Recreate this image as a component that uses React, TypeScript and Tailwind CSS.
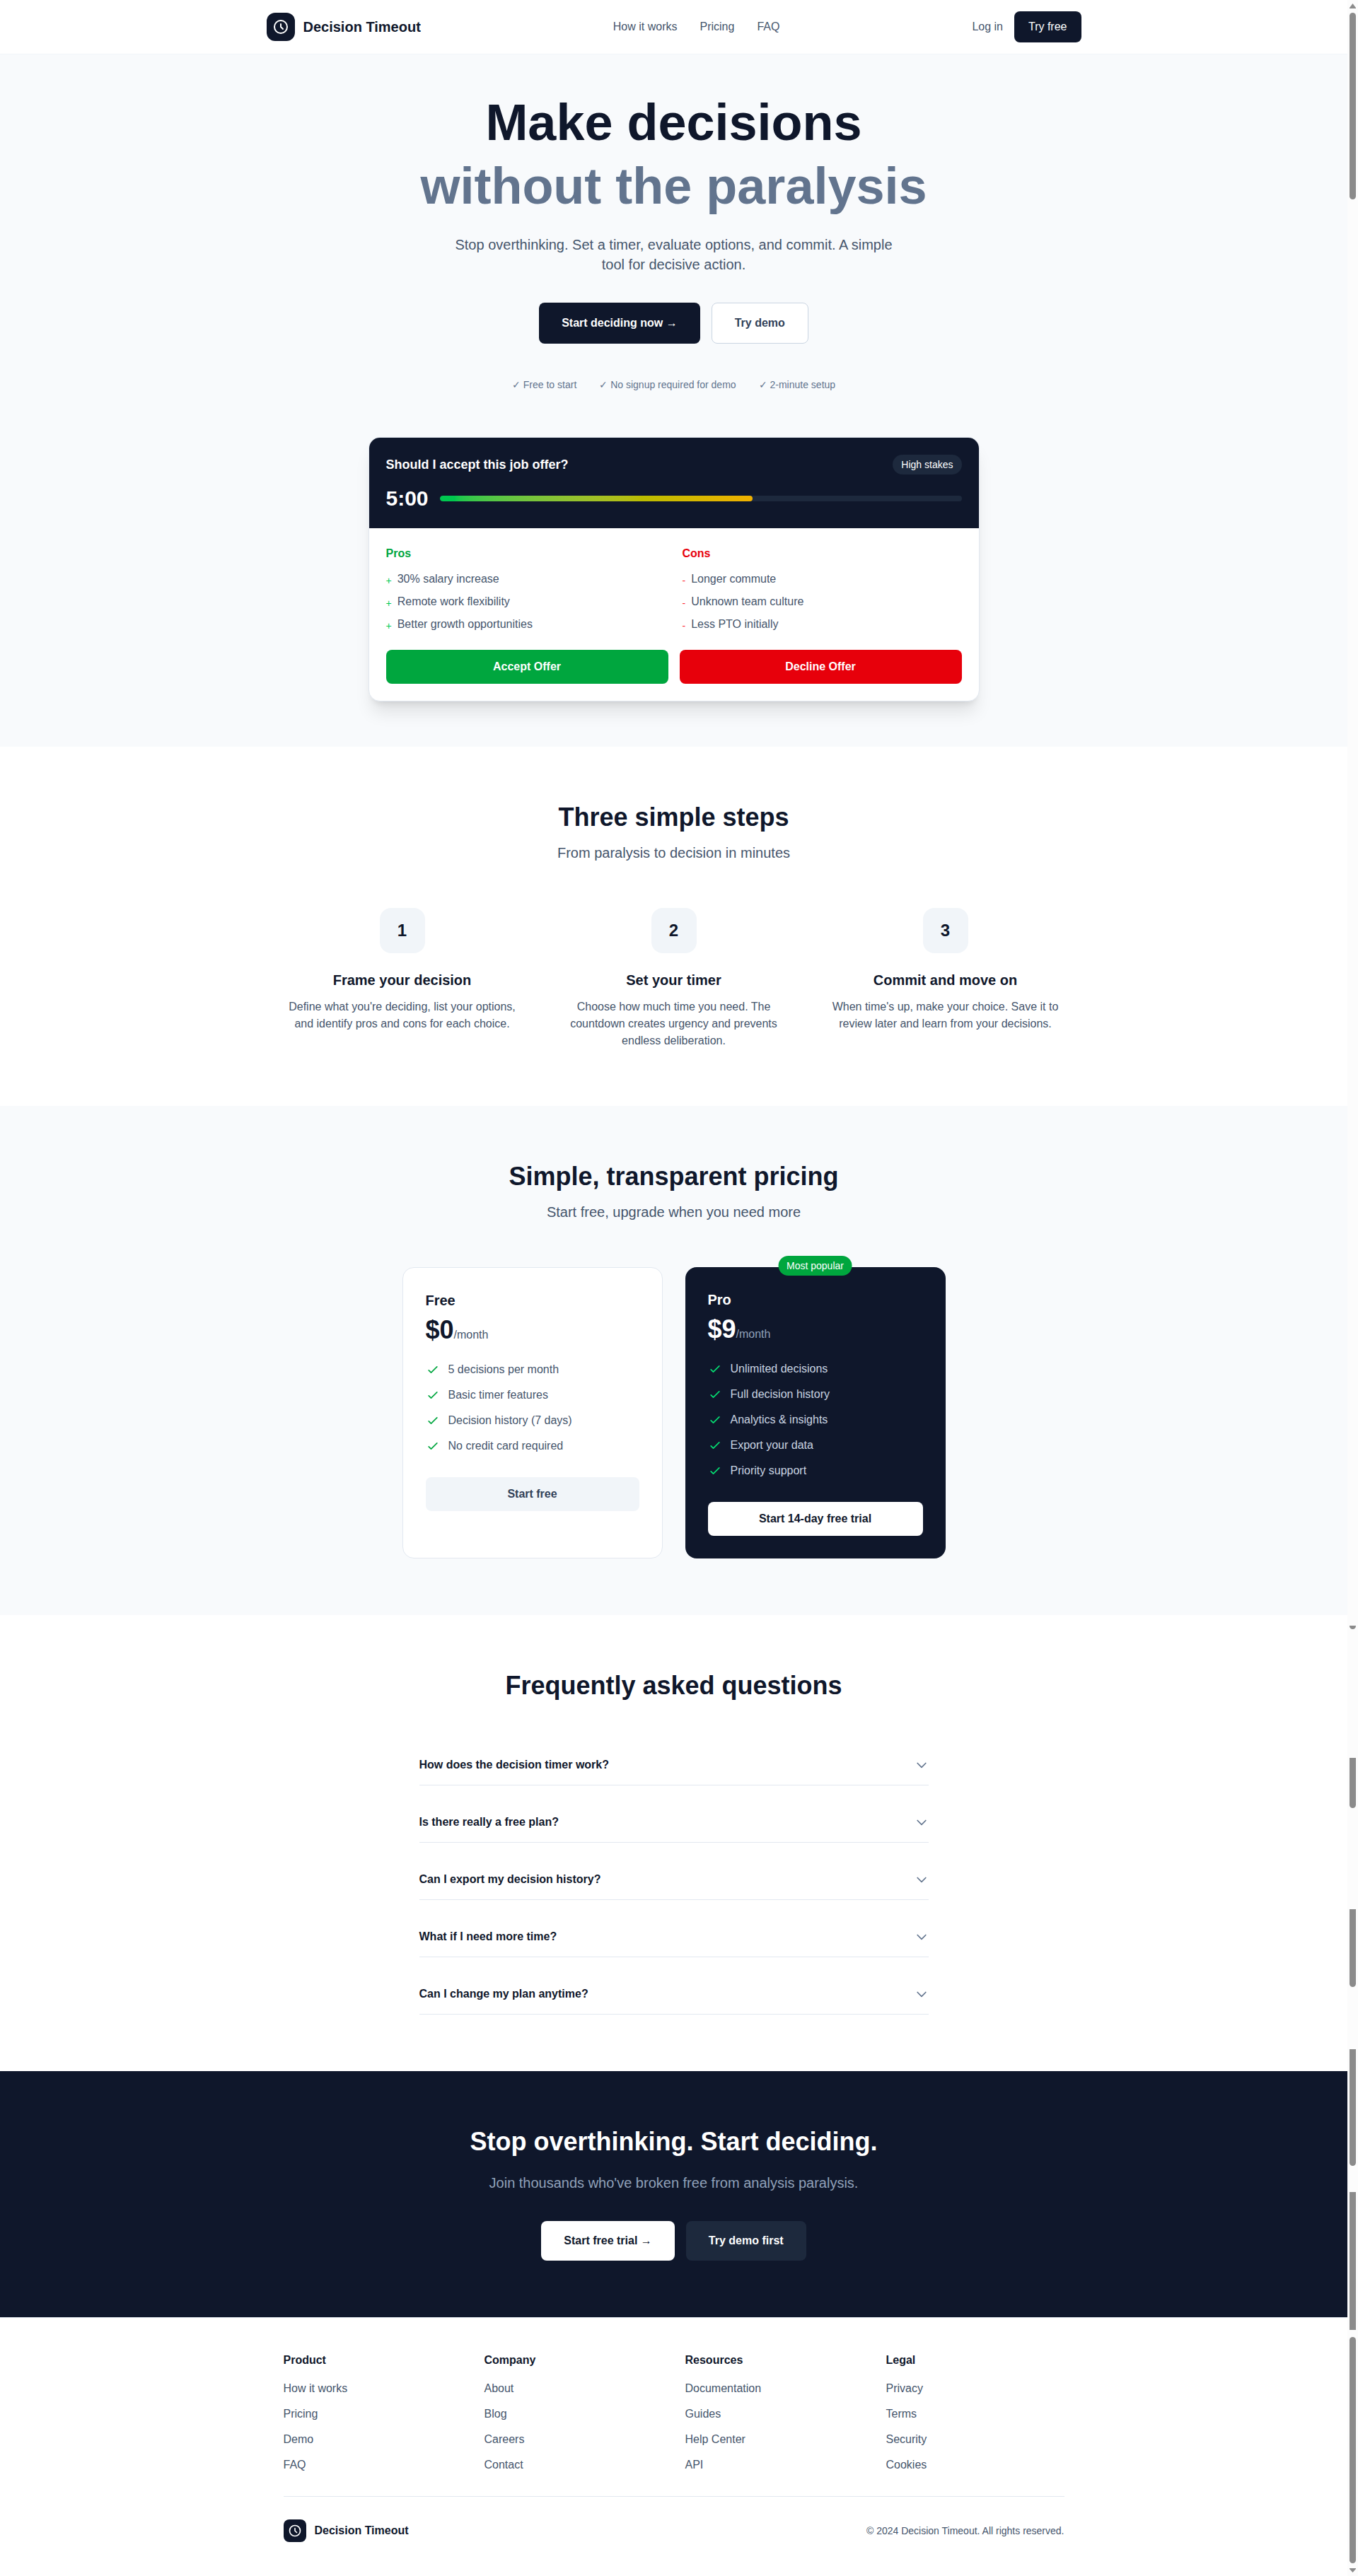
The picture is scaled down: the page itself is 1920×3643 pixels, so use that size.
import React from "react";

const NAV_LINKS = ["How it works", "Pricing", "FAQ"];

const ASSURANCES = ["Free to start", "No signup required for demo", "2-minute setup"];

const PROS = ["30% salary increase", "Remote work flexibility", "Better growth opportunities"];
const CONS = ["Longer commute", "Unknown team culture", "Less PTO initially"];

const STEPS = [
  {
    title: "Frame your decision",
    text: "Define what you're deciding, list your options, and identify pros and cons for each choice.",
  },
  {
    title: "Set your timer",
    text: "Choose how much time you need. The countdown creates urgency and prevents endless deliberation.",
  },
  {
    title: "Commit and move on",
    text: "When time's up, make your choice. Save it to review later and learn from your decisions.",
  },
];

const FREE_FEATURES = [
  "5 decisions per month",
  "Basic timer features",
  "Decision history (7 days)",
  "No credit card required",
];

const PRO_FEATURES = [
  "Unlimited decisions",
  "Full decision history",
  "Analytics & insights",
  "Export your data",
  "Priority support",
];

const QUESTIONS = [
  "How does the decision timer work?",
  "Is there really a free plan?",
  "Can I export my decision history?",
  "What if I need more time?",
  "Can I change my plan anytime?",
];

const FOOTER_COLUMNS = [
  { title: "Product", links: ["How it works", "Pricing", "Demo", "FAQ"] },
  { title: "Company", links: ["About", "Blog", "Careers", "Contact"] },
  { title: "Resources", links: ["Documentation", "Guides", "Help Center", "API"] },
  { title: "Legal", links: ["Privacy", "Terms", "Security", "Cookies"] },
];

function ClockIcon({ className }: { className: string }) {
  return (
    <svg className={className} viewBox="0 0 24 24" fill="none" stroke="currentColor" strokeWidth={2} strokeLinecap="round" strokeLinejoin="round" aria-hidden="true">
      <path d="M12 8v4l3 3m6-3a9 9 0 11-18 0 9 9 0 0118 0z" />
    </svg>
  );
}

function CheckIcon({ className }: { className: string }) {
  return (
    <svg className={className} viewBox="0 0 24 24" fill="none" stroke="currentColor" strokeWidth={2} strokeLinecap="round" strokeLinejoin="round" aria-hidden="true">
      <path d="M5 13l4 4L19 7" />
    </svg>
  );
}

function ChevronIcon() {
  return (
    <svg className="size-5 text-slate-500" viewBox="0 0 24 24" fill="none" stroke="currentColor" strokeWidth={2} strokeLinecap="round" strokeLinejoin="round" aria-hidden="true">
      <path d="M19 9l-7 7-7-7" />
    </svg>
  );
}

function Header() {
  return (
    <header className="border-b border-slate-100 bg-white px-6 py-4">
      <div className="mx-auto flex max-w-6xl items-center justify-between">
        <a href="#" className="flex items-center gap-3">
          <span className="flex size-10 items-center justify-center rounded-xl bg-slate-900 text-white">
            <ClockIcon className="size-6" />
          </span>
          <span className="text-xl font-semibold text-slate-900">Decision Timeout</span>
        </a>
        <nav className="flex items-center gap-8 text-slate-600">
          {NAV_LINKS.map((label) => (
            <a key={label} href="#">
              {label}
            </a>
          ))}
        </nav>
        <div className="flex items-center gap-4">
          <a href="#" className="text-slate-600">
            Log in
          </a>
          <a href="#" className="rounded-lg bg-slate-900 px-5 py-2.5 text-white">
            Try free
          </a>
        </div>
      </div>
    </header>
  );
}

function ArgumentList({
  title,
  sign,
  items,
  titleClass,
  signClass,
}: {
  title: string;
  sign: string;
  items: string[];
  titleClass: string;
  signClass: string;
}) {
  return (
    <div>
      <h4 className={titleClass}>{title}</h4>
      <ul className="space-y-2">
        {items.map((item) => (
          <li key={item} className="flex items-start gap-2 text-slate-600">
            <span className={signClass}>{sign}</span>
            {item}
          </li>
        ))}
      </ul>
    </div>
  );
}

function DemoCard() {
  return (
    <div className="mx-auto mt-16 max-w-[864px] overflow-hidden rounded-2xl border border-slate-200 bg-white text-left shadow-xl">
      <div className="bg-slate-900 p-6 text-white">
        <div className="mb-4 flex items-center justify-between">
          <h3 className="text-lg font-semibold">Should I accept this job offer?</h3>
          <span className="rounded-full bg-slate-800 px-3 py-1 text-sm">High stakes</span>
        </div>
        <div className="flex items-center gap-4">
          <span className="text-3xl font-bold">5:00</span>
          <div className="h-2 flex-1 overflow-hidden rounded-full bg-slate-800">
            <div className="h-full w-3/5 rounded-full bg-linear-to-r from-green-500 to-yellow-500" />
          </div>
        </div>
      </div>
      <div className="p-6">
        <div className="mb-6 grid grid-cols-2 gap-6">
          <ArgumentList
            title="Pros"
            sign="+"
            items={PROS}
            titleClass="mb-3 font-semibold text-green-600"
            signClass="mt-1 text-sm text-green-500"
          />
          <ArgumentList
            title="Cons"
            sign="-"
            items={CONS}
            titleClass="mb-3 font-semibold text-red-600"
            signClass="mt-1 text-sm text-red-500"
          />
        </div>
        <div className="flex gap-4">
          <button type="button" className="flex-1 rounded-lg bg-green-600 py-3 font-semibold text-white">
            Accept Offer
          </button>
          <button type="button" className="flex-1 rounded-lg bg-red-600 py-3 font-semibold text-white">
            Decline Offer
          </button>
        </div>
      </div>
    </div>
  );
}

function Hero() {
  return (
    <section className="bg-slate-50 px-6 pt-[51px] pb-16 text-center">
      <h1 className="mb-6 text-7xl leading-[90px] font-bold text-slate-900">
        Make decisions
        <br />
        <span className="text-slate-500">without the paralysis</span>
      </h1>
      <p className="mx-auto mb-10 max-w-[640px] text-xl text-slate-600">
        Stop overthinking. Set a timer, evaluate options, and commit. A simple tool for decisive action.
      </p>
      <div className="flex justify-center gap-4">
        <a href="#" className="flex items-center rounded-lg bg-slate-900 px-8 py-4 font-semibold text-white">
          Start deciding now →
        </a>
        <a href="#" className="rounded-lg border border-slate-300 bg-white px-8 py-4 font-semibold text-slate-700">
          Try demo
        </a>
      </div>
      <div className="mt-12 flex justify-center gap-8 text-sm text-slate-500">
        {ASSURANCES.map((text) => (
          <span key={text}>✓ {text}</span>
        ))}
      </div>
      <DemoCard />
    </section>
  );
}

function SectionHeading({ title, text }: { title: string; text?: string }) {
  return (
    <div className="mb-16 text-center">
      <h2 className="text-4xl font-bold text-slate-900">{title}</h2>
      {text && <p className="mt-4 text-xl text-slate-600">{text}</p>}
    </div>
  );
}

function Steps() {
  return (
    <section className="bg-white px-6 py-20">
      <SectionHeading title="Three simple steps" text="From paralysis to decision in minutes" />
      <div className="mx-auto grid max-w-[1104px] grid-cols-3 gap-12">
        {STEPS.map((step, index) => (
          <div key={step.title} className="text-center">
            <div className="mx-auto mb-6 flex size-16 items-center justify-center rounded-2xl bg-slate-100 text-2xl font-bold text-slate-900">
              {index + 1}
            </div>
            <h3 className="mb-3 text-xl font-semibold text-slate-900">{step.title}</h3>
            <p className="text-slate-600">{step.text}</p>
          </div>
        ))}
      </div>
    </section>
  );
}

function FeatureList({ items, iconClass }: { items: string[]; iconClass: string }) {
  return (
    <ul className="mb-8 space-y-3">
      {items.map((item) => (
        <li key={item} className="flex items-center gap-3">
          <CheckIcon className={iconClass} />
          {item}
        </li>
      ))}
    </ul>
  );
}

function Pricing() {
  return (
    <section className="bg-slate-50 px-6 py-20">
      <SectionHeading title="Simple, transparent pricing" text="Start free, upgrade when you need more" />
      <div className="mx-auto grid max-w-3xl grid-cols-2 gap-8">
        <div className="rounded-2xl border border-slate-200 bg-white p-8 text-slate-600">
          <h3 className="mb-2 text-xl font-semibold text-slate-900">Free</h3>
          <p className="mb-6">
            <span className="text-4xl font-bold text-slate-900">$0</span>
            <span>/month</span>
          </p>
          <FeatureList items={FREE_FEATURES} iconClass="size-5 text-green-600" />
          <button type="button" className="w-full rounded-lg bg-slate-100 py-3 font-semibold text-slate-700">
            Start free
          </button>
        </div>
        <div className="relative rounded-2xl bg-slate-900 p-8 text-slate-300">
          <span className="absolute -top-4 left-1/2 -translate-x-1/2 rounded-full bg-green-600 px-3 py-1 text-sm whitespace-nowrap text-white">
            Most popular
          </span>
          <h3 className="mb-2 text-xl font-semibold text-white">Pro</h3>
          <p className="mb-6">
            <span className="text-4xl font-bold text-white">$9</span>
            <span className="text-slate-400">/month</span>
          </p>
          <FeatureList items={PRO_FEATURES} iconClass="size-5 text-green-400" />
          <button type="button" className="w-full rounded-lg bg-white py-3 font-semibold text-slate-900">
            Start 14-day free trial
          </button>
        </div>
      </div>
    </section>
  );
}

function Faq() {
  return (
    <section className="bg-white px-6 py-20">
      <SectionHeading title="Frequently asked questions" />
      <div className="mx-auto max-w-[720px] space-y-6">
        {QUESTIONS.map((question) => (
          <div key={question} className="border-b border-slate-200">
            <button type="button" className="flex w-full items-center justify-between py-4 text-left font-semibold text-slate-900">
              {question}
              <ChevronIcon />
            </button>
          </div>
        ))}
      </div>
    </section>
  );
}

function CallToAction() {
  return (
    <section className="bg-slate-900 px-6 py-20 text-center">
      <h2 className="mb-6 text-4xl font-bold text-white">Stop overthinking. Start deciding.</h2>
      <p className="mb-10 text-xl text-slate-400">Join thousands who've broken free from analysis paralysis.</p>
      <div className="flex justify-center gap-4">
        <a href="#" className="rounded-lg bg-white px-8 py-4 font-semibold text-slate-900">
          Start free trial →
        </a>
        <a href="#" className="rounded-lg bg-slate-800 px-8 py-4 font-semibold text-white">
          Try demo first
        </a>
      </div>
    </section>
  );
}

function Footer() {
  return (
    <footer className="border-t border-slate-200 bg-white px-6 py-12">
      <div className="mx-auto max-w-[1104px]">
        <div className="grid grid-cols-4 gap-8">
          {FOOTER_COLUMNS.map((column) => (
            <div key={column.title}>
              <h4 className="mb-4 font-semibold text-slate-900">{column.title}</h4>
              <ul className="space-y-3 text-slate-600">
                {column.links.map((link) => (
                  <li key={link}>
                    <a href="#">{link}</a>
                  </li>
                ))}
              </ul>
            </div>
          ))}
        </div>
        <div className="mt-8 flex items-center justify-between border-t border-slate-200 pt-8">
          <a href="#" className="flex items-center gap-3">
            <span className="flex size-8 items-center justify-center rounded-lg bg-slate-900 text-white">
              <ClockIcon className="size-5" />
            </span>
            <span className="font-semibold text-slate-900">Decision Timeout</span>
          </a>
          <p className="text-sm text-slate-600">© 2024 Decision Timeout. All rights reserved.</p>
        </div>
      </div>
    </footer>
  );
}

function ScrollTrack() {
  return (
    <div className="flex w-[15px] shrink-0 flex-col items-center bg-[#fcfcfc]" aria-hidden="true">
      <svg className="mt-[5px] h-[7px] w-[9px] shrink-0 text-[#8b8b8b]" viewBox="0 0 9 7" fill="currentColor">
        <path d="M4.5 0L9 6v1H0V6z" />
      </svg>
      <div className="mt-1.5 h-[264px] w-[9px] shrink-0 rounded-full bg-[#8b8b8b]" />
      <div className="mt-[2017px] h-[5px] w-[9px] shrink-0 rounded-b-full bg-[#8b8b8b]" />
      <div className="mt-[182px] h-[71px] w-[9px] shrink-0 rounded-b-full bg-[#8b8b8b]" />
      <div className="mt-[143px] h-[110px] w-[9px] shrink-0 rounded-b-full bg-[#8b8b8b]" />
      <div className="mt-[88px] h-[165px] w-[9px] shrink-0 rounded-b-full bg-[#8b8b8b]" />
      <div className="mt-[37px] h-[195px] w-[9px] shrink-0 bg-[#8b8b8b]" />
      <div className="mt-[10px] h-[320px] w-[9px] shrink-0 rounded-full bg-[#8b8b8b]" />
      <svg className="mt-[7px] h-[6px] w-[9px] shrink-0 text-[#8b8b8b]" viewBox="0 0 9 6" fill="currentColor">
        <path d="M0 0h9v1L4.5 6L0 1z" />
      </svg>
    </div>
  );
}

export default function App() {
  return (
    <div className="flex bg-white font-['Liberation_Sans',Arial,sans-serif] text-base text-slate-900">
      <div className="min-w-0 flex-1">
        <Header />
        <main>
          <Hero />
          <Steps />
          <Pricing />
          <Faq />
          <CallToAction />
        </main>
        <Footer />
      </div>
      <ScrollTrack />
    </div>
  );
}
